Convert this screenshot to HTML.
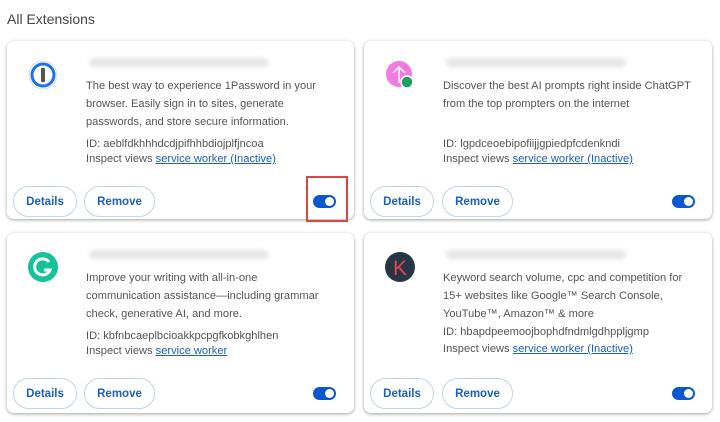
<!DOCTYPE html>
<html><head><style>
*{margin:0;padding:0;box-sizing:border-box}
body{width:720px;height:422px;background:#fff;font-family:"Liberation Sans",Arial,sans-serif;position:relative;overflow:hidden;color:#474747}
.h{position:absolute;left:7px;top:11px;font-size:14px;color:#444}
.card{position:absolute;background:#fff;border-radius:7px;box-shadow:0 1px 3px rgba(0,0,0,.3),0 1px 5px rgba(0,0,0,.08)}
.ic{position:absolute;left:20px;top:18px;width:32px;height:32px}
.t{position:absolute;left:82px;top:17px;height:9px;width:180px;background:#e6e6e6;border-radius:5px;filter:blur(2px)}
.d{position:absolute;left:79px;top:36px;font-size:11.1px;line-height:18px;white-space:nowrap;color:#555}
.id{position:absolute;left:79px;font-size:11.1px;color:#555;white-space:nowrap}
a{color:#1a5fc2;text-decoration:underline}
.b{position:absolute;top:145px;height:31px;border:1px solid #c4d3ea;border-radius:16px;color:#1a5fc2;font-size:11.5px;font-weight:bold;display:flex;align-items:center;justify-content:center}
.tg{position:absolute;top:154px;width:23px;height:13px;border-radius:7px;background:#0b57d0}
.tg::after{content:"";position:absolute;right:2px;top:2px;width:9px;height:9px;border-radius:50%;background:#fff}
</style></head><body>
<div class="h">All Extensions</div>

<div class="card" style="left:7px;top:41px;width:347px;height:178px">
 <svg class="ic" viewBox="0 0 32 32"><circle cx="16" cy="16" r="14" fill="#fff" stroke="#ddd"/><circle cx="16" cy="16" r="11" fill="none" stroke="#1a73e8" stroke-width="3"/><rect x="14" y="9" width="4" height="14" rx="1" fill="#555"/></svg>
 <div class="t"></div>
 <div class="d">The best way to experience 1Password in your<br>browser. Easily sign in to sites, generate<br>passwords, and store secure information.</div>
 <div class="id" style="top:97px">ID: aeblfdkhhhdcdjpifhhbdiojplfjncoa</div>
 <div class="id" style="top:112px">Inspect views <a>service worker (Inactive)</a></div>
 <div class="b" style="left:6px;width:64px">Details</div>
 <div class="b" style="left:77px;width:71px">Remove</div>
 <div class="tg" style="left:306px"></div>
</div>
<div style="position:absolute;left:306px;top:176px;width:42px;height:46px;border:2px solid #e0443e"></div>

<div class="card" style="left:364px;top:41px;width:348px;height:178px">
 <svg class="ic" viewBox="0 0 32 32"><circle cx="15" cy="15" r="13" fill="#f27be0"/><path d="M15 24V8M9 14l6-6 6 6" stroke="#fff" stroke-width="1.5" fill="none"/><circle cx="23" cy="23" r="6" fill="#1aa260" stroke="#fff" stroke-width="1.5"/></svg>
 <div class="t"></div>
 <div class="d">Discover the best AI prompts right inside ChatGPT<br>from the top prompters on the internet</div>
 <div class="id" style="top:97px">ID: lgpdceoebipofiijjgpiedpfcdenkndi</div>
 <div class="id" style="top:112px">Inspect views <a>service worker (Inactive)</a></div>
 <div class="b" style="left:6px;width:64px">Details</div>
 <div class="b" style="left:78px;width:71px">Remove</div>
 <div class="tg" style="left:308px"></div>
</div>

<div class="card" style="left:7px;top:233px;width:347px;height:180px">
 <svg class="ic" viewBox="0 0 32 32"><circle cx="16" cy="16" r="15" fill="#15c39a"/><path d="M22 11a8 8 0 1 0 1 8h-6" stroke="#fff" stroke-width="3" fill="none"/></svg>
 <div class="t"></div>
 <div class="d">Improve your writing with all-in-one<br>communication assistance—including grammar<br>check, generative AI, and more.</div>
 <div class="id" style="top:97px">ID: kbfnbcaeplbcioakkpcpgfkobkghlhen</div>
 <div class="id" style="top:112px">Inspect views <a>service worker</a></div>
 <div class="b" style="left:6px;width:64px">Details</div>
 <div class="b" style="left:77px;width:71px">Remove</div>
 <div class="tg" style="left:306px"></div>
</div>

<div class="card" style="left:364px;top:233px;width:348px;height:180px">
 <svg class="ic" viewBox="0 0 32 32"><circle cx="16" cy="16" r="15" fill="#263646"/><text x="16" y="24" text-anchor="middle" font-size="21" font-family="Liberation Sans" fill="#e2474a">K</text></svg>
 <div class="t"></div>
 <div class="d">Keyword search volume, cpc and competition for<br>15+ websites like Google™ Search Console,<br>YouTube™, Amazon™ &amp; more</div>
 <div class="id" style="top:93px">ID: hbapdpeemoojbophdfndmlgdhppljgmp</div>
 <div class="id" style="top:110px">Inspect views <a>service worker (Inactive)</a></div>
 <div class="b" style="left:6px;width:64px">Details</div>
 <div class="b" style="left:78px;width:71px">Remove</div>
 <div class="tg" style="left:308px"></div>
</div>
</body></html>
